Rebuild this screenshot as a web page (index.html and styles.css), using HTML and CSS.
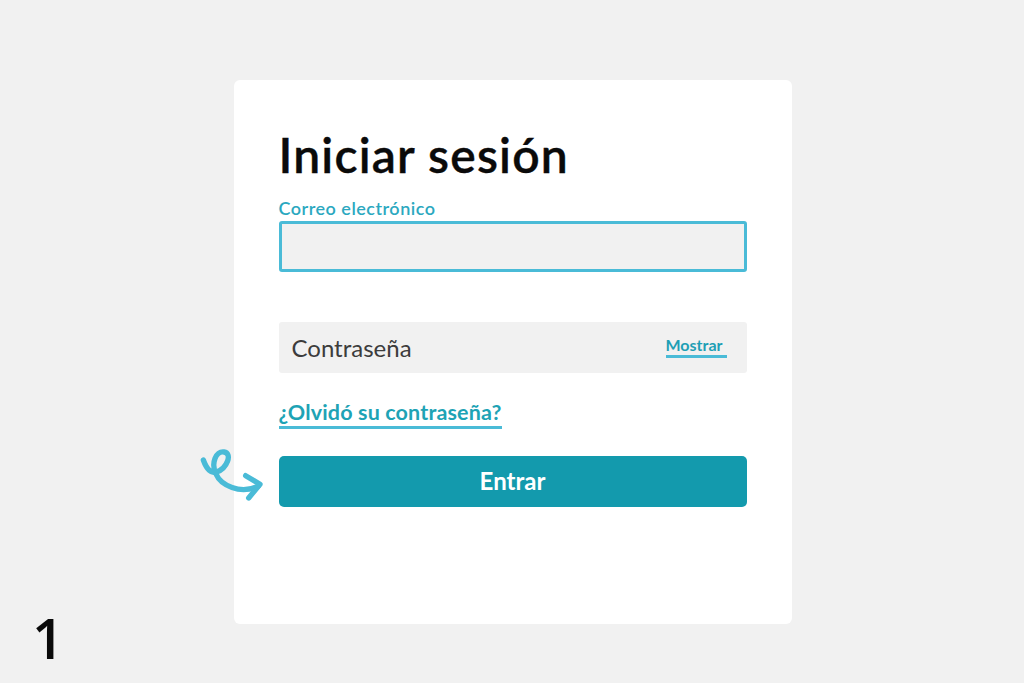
FILE: index.html
```html
<!DOCTYPE html>
<html lang="es">
  <head>
    <meta charset="UTF-8" />
    <meta name="viewport" content="width=device-width, initial-scale=1.0" />
    <title>Iniciar sesión</title>
    <link rel="stylesheet" href="styles.css">
  </head>
  <body>
    <div class="card">
      <h1 class="title">Iniciar sesión</h1>

      <label class="field-label" for="email">Correo electrónico</label>
      <div class="input-focus" id="email"></div>

      <div class="input-password">
        <span class="placeholder">Contraseña</span>
        <a class="show-link">Mostrar</a>
      </div>

      <a class="forgot-link">¿Olvidó su contraseña?</a>

      <div class="submit-row">
        <!-- hand drawn arrow -->
        <svg class="arrow" viewBox="0 0 300 210" fill="none" stroke="#4abbd7" stroke-width="16" stroke-linecap="round" stroke-linejoin="round">
          <path d="M40 60 C50 88 64 102 80 96 C112 84 128 40 102 36 C78 32 62 70 78 102 C92 135 150 165 205 138" />
          <path d="M167 107 L210 133 L176 174" />
        </svg>
        <button class="submit">Entrar</button>
      </div>
    </div>

    <div class="step">1</div>
  </body>
</html>
```

FILE: styles.css
```css
body {
  margin: 0;
  height: 683px;
  overflow: hidden;
  background-color: #f1f1f1;
  font-family: "Lato", "Open Sans", sans-serif;
  display: flex;
  justify-content: center;
  align-items: flex-start;
  padding-top: 80px;
  box-sizing: border-box;
}

.card {
  width: 558px;
  height: 544px;
  box-sizing: border-box;
  margin-left: 1px;
  padding: 45px 45px 0;
  background-color: #fff;
  border-radius: 6px;
  display: flex;
  flex-direction: column;
  align-items: flex-start;
}

.title {
  margin: 0;
  font-size: 48px;
  line-height: 60px;
  font-weight: 600;
  color: #0a0a0a;
  letter-spacing: 1.2px;
  -webkit-text-stroke: 0.4px #0a0a0a;
}

.field-label {
  margin-top: 13px;
  font-size: 18px;
  line-height: 20px;
  font-weight: 600;
  color: #2ba8bf;
  height: 17px;
  letter-spacing: 0.5px;
  white-space: nowrap;
}

.input-focus {
  width: 468px;
  height: 51px;
  margin-top: 6px;
  box-sizing: border-box;
  background-color: #f1f1f1;
  border: 3px solid #4abbd7;
  border-radius: 3px;
}

.input-password {
  width: 468px;
  height: 51px;
  margin-top: 50px;
  box-sizing: border-box;
  padding: 0 20px 0 13px;
  background-color: #f1f1f1;
  border-radius: 3px;
  display: flex;
  justify-content: space-between;
  align-items: center;
}

.placeholder {
  font-size: 24px;
  color: #3c3c3c;
}

.show-link {
  width: 61px;
  font-size: 16px;
  line-height: 20px;
  font-weight: 700;
  color: #1f9fb5;
  border-bottom: 3px solid #4abbd7;
  margin-bottom: 3px;
}

.forgot-link {
  margin-top: 26px;
  font-size: 21.5px;
  line-height: 26px;
  font-weight: 700;
  color: #1ea3b5;
  border-bottom: 3px solid #4abbd7;
  padding-bottom: 1px;
  letter-spacing: 0.15px;
}

.submit-row {
  position: relative;
  margin-top: 27px;
}

.arrow {
  position: absolute;
  left: -89px;
  top: -16px;
  width: 100px;
  height: 70px;
}

.submit {
  display: block;
  width: 468px;
  height: 51px;
  border: none;
  border-radius: 5px;
  background-color: #139aad;
  color: #fff;
  font-family: inherit;
  font-size: 24px;
  font-weight: 700;
  padding-bottom: 3px;
}

.step {
  position: absolute;
  left: 32px;
  top: 603px;
  font-family: "Open Sans", sans-serif;
  font-size: 56px;
  font-weight: 600;
  line-height: 68px;
  color: #0a0a0a;
}
```
